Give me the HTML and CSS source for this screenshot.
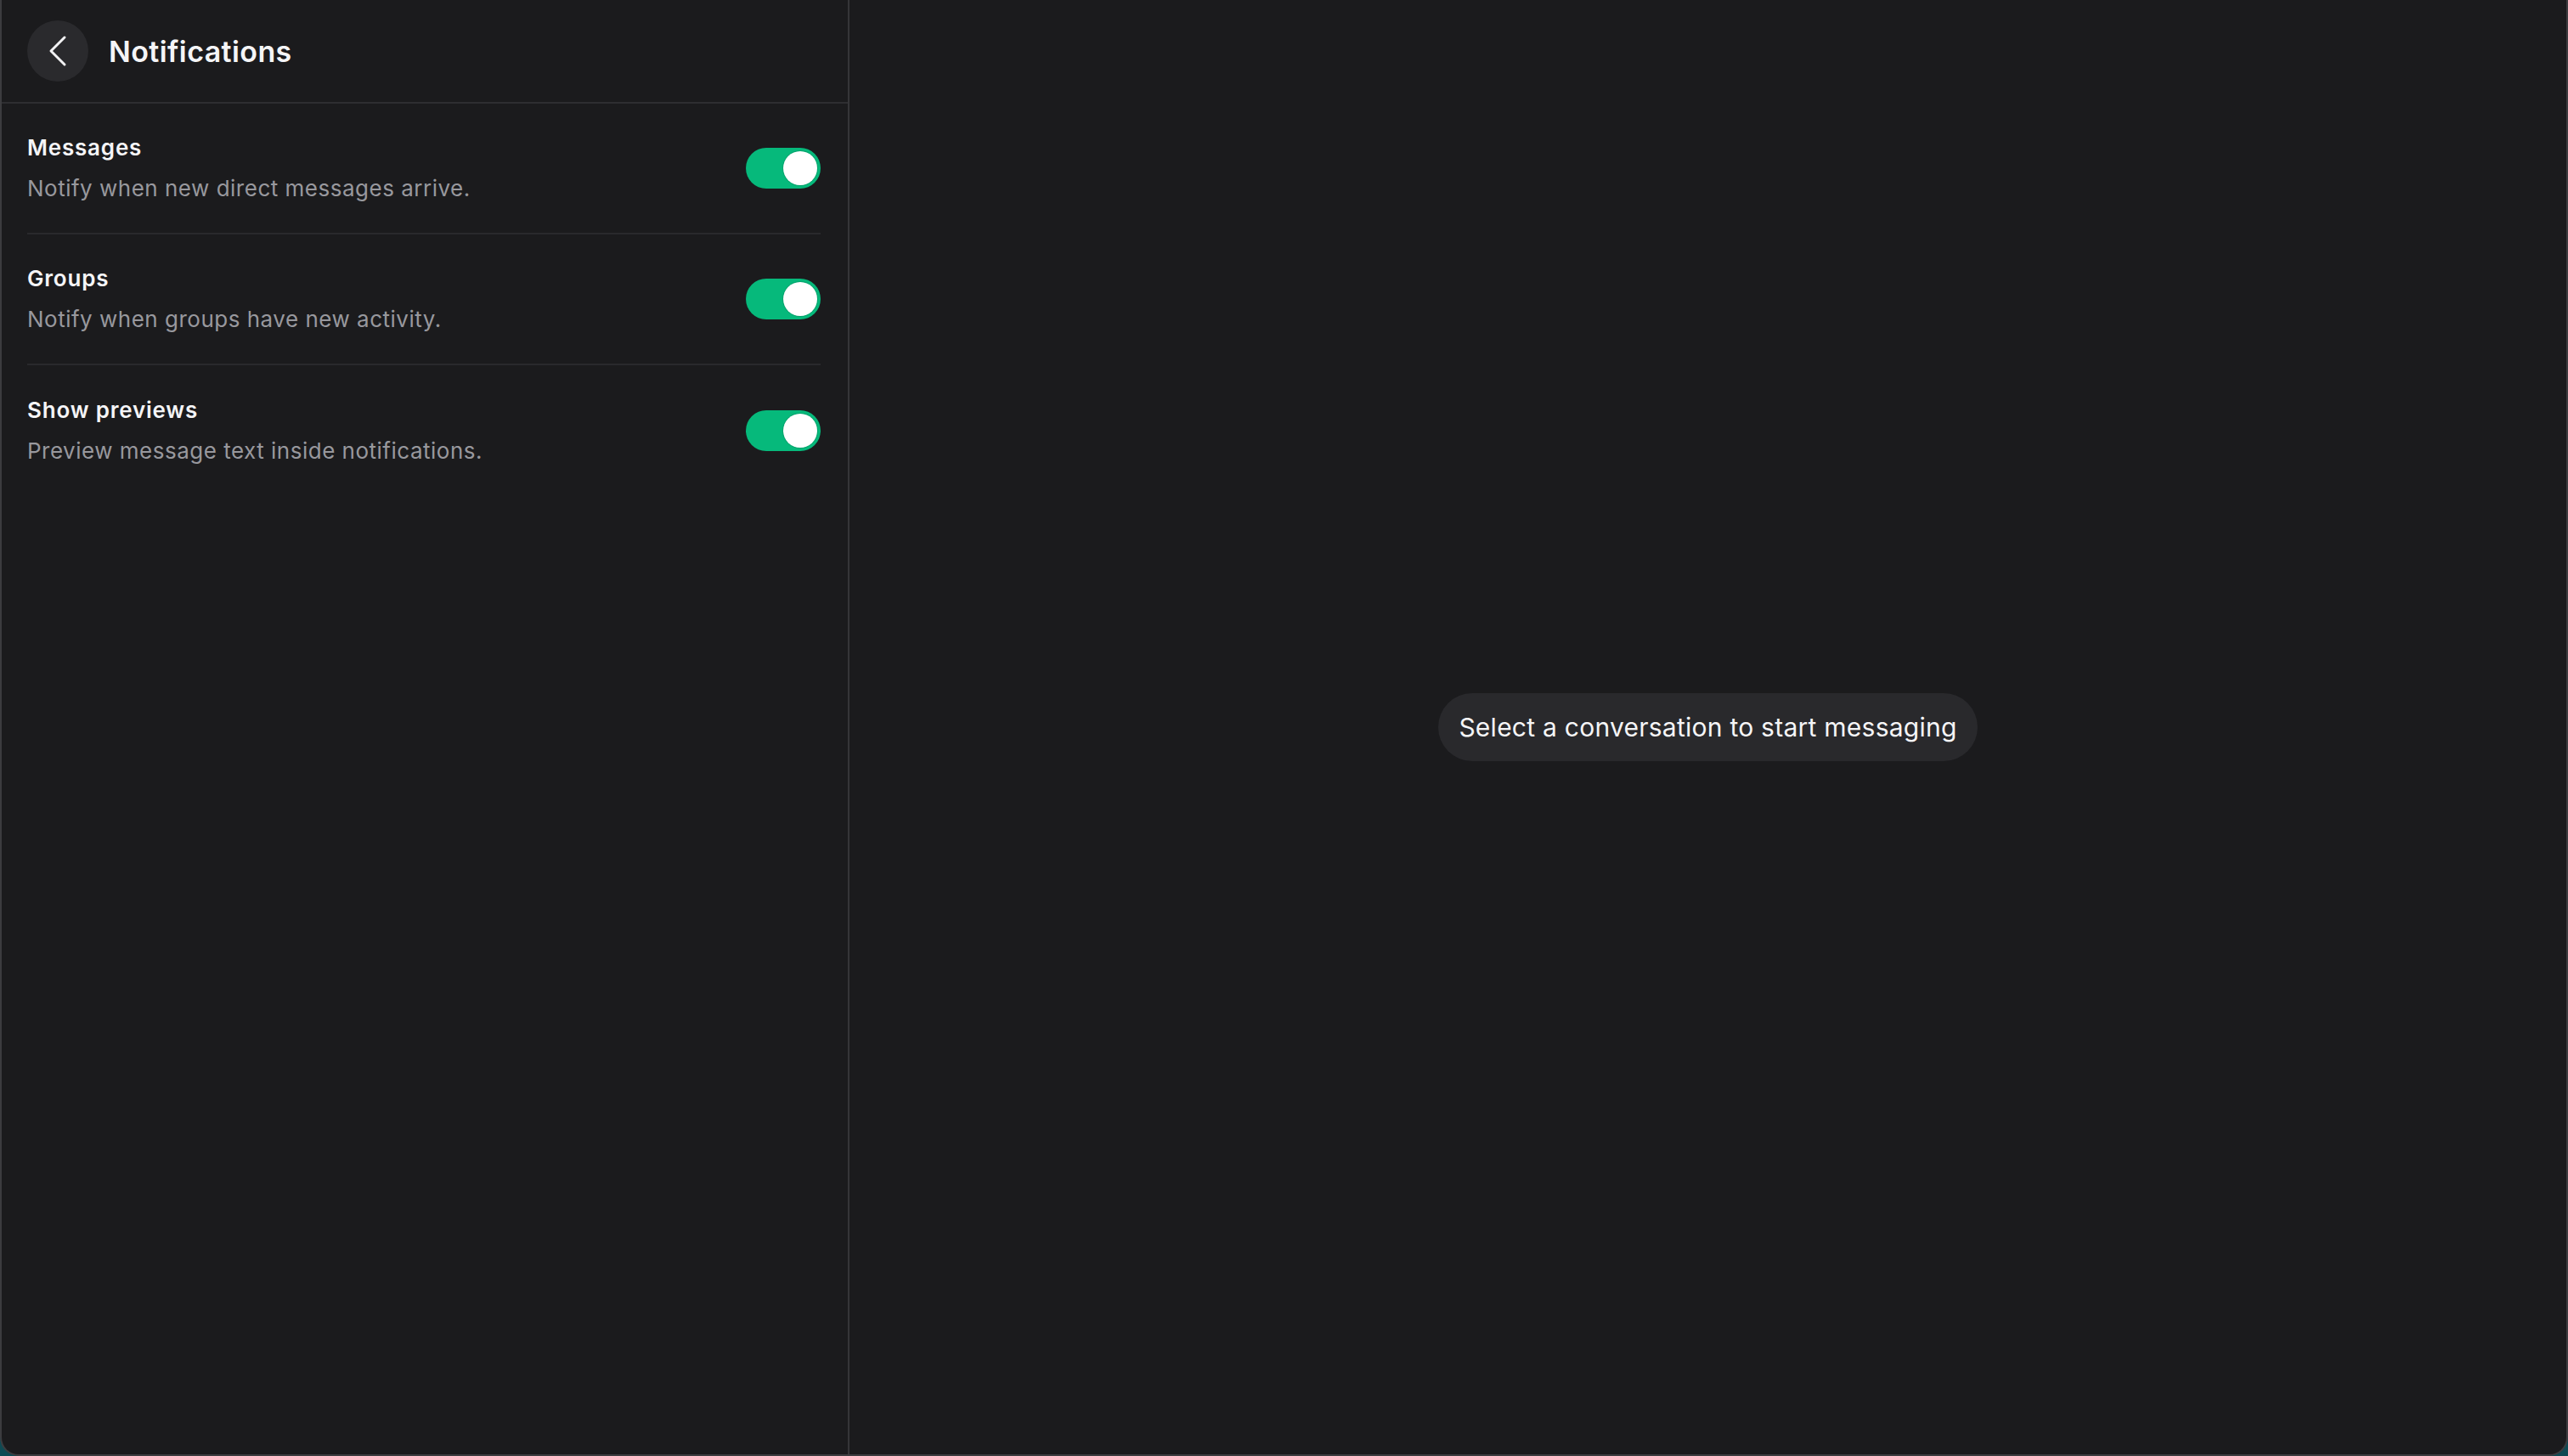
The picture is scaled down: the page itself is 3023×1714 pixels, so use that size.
FILE: index.html
```html
<!DOCTYPE html>
<html lang="en">
  <head>
    <meta charset="UTF-8" />
    <meta name="viewport" content="width=device-width, initial-scale=1.0" />
    <title>Notifications</title>
    <link rel="stylesheet" href="styles.css">
  </head>
  <body>
    <div class="window">
      <aside class="sidebar">
        <header class="sidebar-header">
          <button class="back-button" aria-label="Back">
            <svg width="72" height="72" viewBox="0 0 72 72">
              <path d="M44 20 L28 36 L44 52" fill="none" stroke="#f2f2f4" stroke-width="3" stroke-linecap="round" stroke-linejoin="round" />
            </svg>
          </button>
          <h1>Notifications</h1>
        </header>

        <ul class="settings-list">
          <li class="setting-row">
            <div class="setting-text">
              <h2>Messages</h2>
              <p>Notify when new direct messages arrive.</p>
            </div>
            <label class="switch">
              <input type="checkbox" checked />
              <span class="track"></span>
            </label>
          </li>
          <li class="setting-row">
            <div class="setting-text">
              <h2>Groups</h2>
              <p>Notify when groups have new activity.</p>
            </div>
            <label class="switch">
              <input type="checkbox" checked />
              <span class="track"></span>
            </label>
          </li>
          <li class="setting-row">
            <div class="setting-text">
              <h2>Show previews</h2>
              <p>Preview message text inside notifications.</p>
            </div>
            <label class="switch">
              <input type="checkbox" checked />
              <span class="track"></span>
            </label>
          </li>
        </ul>
      </aside>

      <main class="chat-pane">
        <div class="empty-pill">Select a conversation to start messaging</div>
      </main>
    </div>
  </body>
</html>
```

FILE: styles.css
```css
/* Base */
* {
  box-sizing: border-box;
  margin: 0;
  padding: 0;
}

html,
body {
  height: 100%;
}

body {
  font-family: Inter, "Noto Sans", "Liberation Sans", sans-serif;
  background-color: #0e4a53;
  color: #f5f5f7;
  overflow: hidden;
}

/* App window */
.window {
  height: 100vh;
  display: flex;
  background-color: #1b1b1d;
  border: 2px solid #3c3c3f;
  border-top: none;
  border-radius: 0 0 22px 22px;
  overflow: hidden;
}

/* Sidebar */
.sidebar {
  width: 998px;
  flex-shrink: 0;
  display: flex;
  flex-direction: column;
  border-right: 2px solid #353538;
}

.sidebar-header {
  height: 122px;
  display: flex;
  align-items: center;
  gap: 24px;
  padding: 0 30px;
  border-bottom: 2px solid #2e2e31;
}

.back-button {
  width: 72px;
  height: 72px;
  border: none;
  border-radius: 50%;
  background-color: #2a2a2d;
  display: flex;
  align-items: center;
  justify-content: center;
  cursor: pointer;
}

.sidebar-header h1 {
  font-size: 34px;
  font-weight: 600;
  letter-spacing: 0.4px;
  color: #f5f5f7;
}

/* Settings rows */
.settings-list {
  list-style: none;
  padding: 0 32px 0 30px;
}

.setting-row {
  min-height: 154px;
  display: flex;
  align-items: center;
  justify-content: space-between;
  padding: 34px 0;
  border-bottom: 2px solid #29292c;
}

.setting-row:last-child {
  border-bottom: none;
}

.setting-text h2 {
  font-size: 26px;
  line-height: 36px;
  font-weight: 600;
  letter-spacing: 0.8px;
  color: #f5f5f7;
}

.setting-text p {
  margin-top: 12px;
  font-size: 26px;
  line-height: 36px;
  letter-spacing: 0.5px;
  color: #98989d;
}

/* Toggle switch */
.switch {
  position: relative;
  width: 88px;
  height: 48px;
  flex-shrink: 0;
  cursor: pointer;
}

.switch input {
  display: none;
}

.track {
  display: block;
  width: 100%;
  height: 100%;
  border-radius: 24px;
  background-color: #3a3a3c;
  transition: background-color 0.2s ease;
}

.track::after {
  content: "";
  position: absolute;
  top: 4px;
  left: 4px;
  width: 40px;
  height: 40px;
  border-radius: 50%;
  background-color: #ffffff;
  box-shadow: 0 0 0 1px rgba(0, 120, 80, 0.35);
  transition: transform 0.2s ease;
}

.switch input:checked + .track {
  background-color: #06b97b;
}

.switch input:checked + .track::after {
  transform: translateX(40px);
}

/* Empty conversation pane */
.chat-pane {
  flex: 1;
  display: flex;
  align-items: center;
  justify-content: center;
}

.empty-pill {
  height: 80px;
  padding: 0 24px;
  display: flex;
  align-items: center;
  border-radius: 40px;
  background-color: #29292c;
  font-size: 30px;
  letter-spacing: 0.25px;
  color: #f5f5f7;
}
```
